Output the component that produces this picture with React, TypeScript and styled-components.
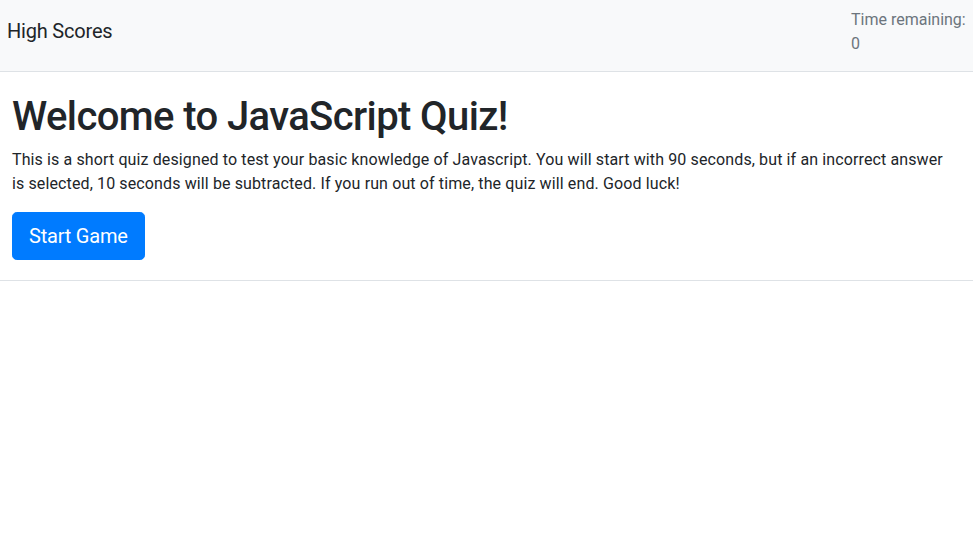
import React from "react";
import styled, { createGlobalStyle } from "styled-components";

const Global = createGlobalStyle`
  html, body { margin: 0; padding: 0; background: #fff; }
  body {
    font-family: Roboto, "Liberation Sans", Arial, sans-serif;
    color: #212529;
    font-size: 16px;
    line-height: 1.5;
  }
  * { box-sizing: border-box; }
`;

const NavBar = styled.nav`
  display: flex;
  justify-content: space-between;
  align-items: flex-start;
  height: 72px;
  padding: 0 6px 0 7px;
  background: #f8f9fa;
  border-bottom: 1px solid #dee2e6;
`;

const Brand = styled.a`
  font-size: 20px;
  line-height: 30px;
  margin-top: 16px;
  letter-spacing: -0.2px;
  color: #212529;
  text-decoration: none;
  cursor: pointer;
`;

const Timer = styled.div`
  width: 116px;
  margin-top: 8px;
  font-size: 16px;
  line-height: 24px;
  color: #6c757d;
`;

const Main = styled.main`
  padding: 21px 20px 0 12px;
`;

const Title = styled.h1`
  margin: 0 0 7px;
  font-size: 40px;
  font-weight: 500;
  line-height: 48px;
  letter-spacing: -0.6px;
`;

const Intro = styled.p`
  margin: 0 0 16px;
  font-size: 16px;
  line-height: 24px;
  letter-spacing: 0.12px;
`;

const StartButton = styled.button`
  display: inline-block;
  height: 48px;
  padding: 0 16px;
  font-family: inherit;
  font-size: 20px;
  line-height: 46px;
  letter-spacing: -0.2px;
  color: #fff;
  background: #007bff;
  border: 1px solid #007bff;
  border-radius: 4.8px;
  cursor: pointer;
`;

const Divider = styled.hr`
  margin: 20px 0 0;
  border: 0;
  border-top: 1px solid #dee2e6;
`;

export default function App() {
  return (
    <>
      <Global />
      <NavBar>
        <Brand>High Scores</Brand>
        <Timer>
          Time remaining:
          <br />0
        </Timer>
      </NavBar>
      <Main>
        <Title>Welcome to JavaScript Quiz!</Title>
        <Intro>
          This is a short quiz designed to test your basic knowledge of Javascript. You will start with 90 seconds,
          but if an incorrect answer is selected, 10 seconds will be subtracted. If you run out of time, the quiz
          will end. Good luck!
        </Intro>
        <StartButton>Start Game</StartButton>
      </Main>
      <Divider />
    </>
  );
}
